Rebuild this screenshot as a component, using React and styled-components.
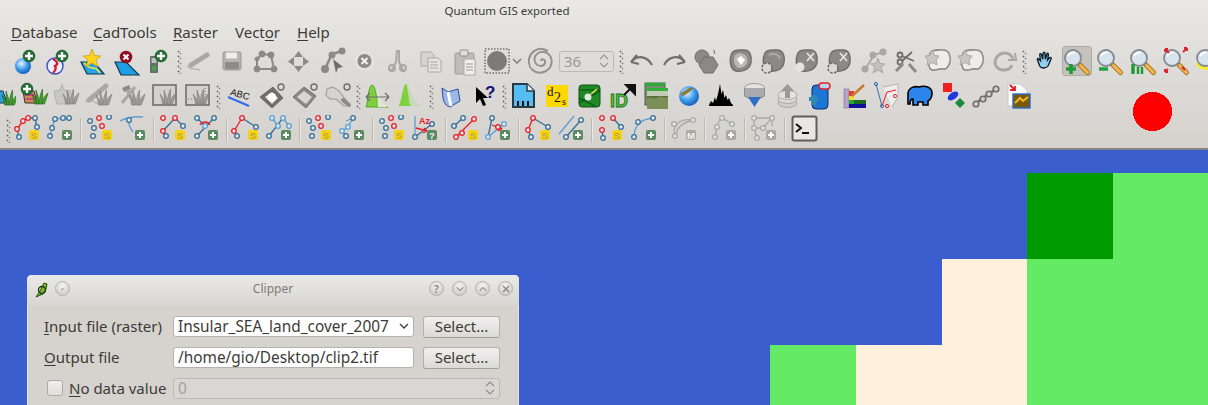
import React from 'react';
import styled, { createGlobalStyle } from 'styled-components';

const UI_FONT = '"Noto Sans", "Open Sans", sans-serif';

const Global = createGlobalStyle`
    html, body { margin: 0; padding: 0; background: #3b5ecf; }
    #root { width: 1208px; height: 405px; overflow: hidden; }
`;

const Page = styled.div`
    position: relative;
    width: 1208px;
    height: 405px;
    overflow: hidden;
    font-family: ${UI_FONT};
    display: flex;
    flex-direction: column;
`;

const Header = styled.header`
    height: 148px;
    flex: none;
    background: linear-gradient(#ebe9e6, #dedcd9 45%, #d5d2ce);
    border-bottom: 2px solid #85847f;
`;

const TitleText = styled.div`
    height: 21px;
    line-height: 21px;
    text-align: center;
    font-size: 11.5px;
    color: #3c3b37;
    padding-right: 194px;
    box-sizing: border-box;
    width: 1208px;
`;

const MenuBar = styled.nav`
    height: 23px;
    display: flex;
    padding-left: 11px;
    font-size: 15px;
    line-height: 22px;
    color: #3c3b37;
`;

const MenuItem = styled.span`
    width: ${p => p.$w}px;
    flex: none;
    u { text-underline-offset: 2px; }
`;

const Row = styled.div`
    display: flex;
    align-items: center;
    height: ${p => p.$h}px;
    margin-left: ${p => p.$left}px;
    margin-top: ${p => p.$top || 0}px;
`;

const Slot = styled.div`
    flex: none;
    width: ${p => p.$w || 33}px;
    height: ${p => p.$h || 34}px;
    svg { display: block; }
`;

const ActiveSlot = styled(Slot)`
    position: relative;
    svg { position: absolute; left: 0; top: 0; }
    &::before {
        content: '';
        position: absolute;
        left: 2px;
        top: 2px;
        width: 30px;
        height: 30px;
        box-sizing: border-box;
        border: 1px solid #aeaba7;
        border-radius: 3px;
        background: #c5c2be;
    }
`;

const Grip = styled.div`
    flex: none;
    width: ${p => p.$w}px;
    height: 25px;
    background-image:
        radial-gradient(circle, #66645f 0.8px, transparent 1.1px),
        radial-gradient(circle, #8f8d88 0.8px, transparent 1.1px);
    background-size: 3px 5px, 3px 5px;
    background-position: ${p => p.$dx}px 0, ${p => p.$dx + 2}px 2px;
    background-repeat: repeat-y;
`;

const Divider = styled.div`
    flex: none;
    width: 7px;
    height: 24px;
    display: flex;
    justify-content: center;
    &::before {
        content: '';
        width: 1px;
        background: #bbb8b4;
        box-shadow: 1px 0 0 #e9e7e4;
    }
`;

const SpinTool = styled.div`
    flex: none;
    width: 55px;
    height: 21px;
    margin: 0 0 0 2px;
    box-sizing: border-box;
    border: 1px solid #bcb9b5;
    border-radius: 3px;
    background: #dfddda;
    color: #9a9894;
    font-size: 15px;
    line-height: 19px;
    padding-left: 4px;
    display: flex;
    justify-content: space-between;
    svg { margin: 1px 4px 0 0; }
`;

const RedDot = styled.svg`
    position: absolute;
    left: 1133px;
    top: 92px;
`;

const MapArea = styled.main`
    flex: 1;
    background: #3b5ecf;
    display: grid;
    grid-template-columns: 770px 86px 86px 85px 86px 95px;
    grid-template-rows: 23px 86px 86px 60px;
`;

const Cell = styled.div`
    grid-column: ${p => p.$col} / span ${p => p.$span || 1};
    grid-row: ${p => p.$row} / span ${p => p.$rows || 1};
    background: ${p => p.$color};
`;

const Dialog = styled.section`
    position: absolute;
    left: 27px;
    top: 275px;
    width: 492px;
    height: 140px;
    box-sizing: border-box;
    background: #d6d3cf;
    border-radius: 5px 5px 0 0;
    box-shadow: inset 0 1px 0 #f2f1ef, inset 1px 0 0 #e6e4e1, inset -1px 0 0 #e6e4e1;
`;

const DialogBar = styled.div`
    height: 30px;
    display: flex;
    align-items: center;
    position: relative;
    padding: 0 6px 0 8px;
    background: linear-gradient(#ebe9e7, #d9d7d3);
    border-radius: 5px 5px 0 0;
`;

const DialogTitle = styled.div`
    position: absolute;
    left: 0;
    right: 0;
    text-align: center;
    font-size: 12px;
    color: #7d7b76;
    margin-top: -3px;
`;

const WinButton = styled.span`
    flex: none;
    width: 15px;
    height: 15px;
    margin-left: ${p => p.$gap}px;
    margin-top: -3px;
    box-sizing: border-box;
    border: 1px solid #b3b1ad;
    border-radius: 50%;
    background: radial-gradient(circle at 50% 30%, #f4f3f1, #c6c4c0);
    display: flex;
    align-items: center;
    justify-content: center;
    font-size: 10px;
    line-height: 1;
    color: #8a8883;
    font-weight: 700;
`;

const BarSpacer = styled.span`
    flex: 1;
`;

const Form = styled.div`
    display: grid;
    grid-template-columns: 129px 241px 9px 77px;
    grid-auto-rows: 21px;
    row-gap: 10px;
    padding: 11px 0 0 17px;
    align-items: center;
    font-size: 15px;
    color: #3c3b37;
`;

const FieldLabel = styled.label`
    grid-column: 1;
    white-space: nowrap;
    display: flex;
    align-items: center;
    padding-bottom: 2px;
    u { text-underline-offset: 2px; }
`;

const Field = styled.div`
    grid-column: ${p => (p.$wide ? '2 / span 3' : '2')};
    height: 21px;
    box-sizing: border-box;
    border: 1px solid ${p => (p.$wide ? '#bcb9b5' : '#b5b2ae')};
    border-radius: 3px;
    background: ${p => (p.$wide ? '#d9d7d3' : '#ffffff')};
    color: ${p => (p.$wide ? '#a3a19c' : '#3c3b37')};
    font-size: 15.4px;
    line-height: 17px;
    padding: 0 4px 1px;
    display: flex;
    justify-content: space-between;
    align-items: center;
    white-space: nowrap;
`;

const SelectButton = styled.div`
    grid-column: 4;
    height: 22px;
    box-sizing: border-box;
    border: 1px solid #b3b0ac;
    border-bottom-color: #a3a09c;
    border-radius: 3px;
    background: linear-gradient(#f1f0ee, #dcdad7);
    text-align: center;
    line-height: 19px;
`;

const Check = styled.span`
    flex: none;
    width: 16px;
    height: 16px;
    margin: 0 6px 0 3px;
    box-sizing: border-box;
    border: 1px solid #aeaba7;
    border-radius: 3px;
    background: linear-gradient(#f0efed, #e0dedb);
`;

const G1 = '#8b8a87';
const G2 = '#a9a8a5';
const G3 = '#6f6e6b';
const BLUE = '#356d96';
const LBLUE = '#5b9fd3';
const RED = '#ea1c24';
const GREEN = '#1f6f30';

const Defs = styled.svg`
    position: absolute;
    width: 0;
    height: 0;
`;

const Plus = ({ x, y, r = 6 }) => (
    <g>
        <circle cx={x} cy={y} r={r} fill={GREEN} stroke="#16401f" strokeWidth=".5" />
        <path d={`M${x - r + 2} ${y}H${x + r - 2}M${x} ${y - r + 2}V${y + r - 2}`} stroke="#fff" strokeWidth="2.4" />
    </g>
);

const leaf = (x, y, dx, h) =>
    `M${x - 1.4} ${y}Q${x + dx * 0.2 - 1.4} ${y - h * 0.6} ${x + dx} ${y - h}Q${x + dx * 0.4 + 1.6} ${y - h * 0.5} ${x + 1.4} ${y}Z`;

const Grass = ({ x = 20, y = 24, color = '#48a02e', dark = '#1c5e16' }) => (
    <g fill={color} stroke={dark} strokeWidth=".6">
        <path d={leaf(x - 2, y, -4, 10)} />
        <path d={leaf(x + 5, y, 5, 11)} />
        <path d={leaf(x, y, -2, 14)} />
        <path d={leaf(x + 2.5, y, 2, 15)} />
    </g>
);

const GrayGrass = props => <Grass {...props} color="#9f9e9b" dark="#7c7b79" />;

const Blob = ({ d = 'M8 9C10 5 16 6 20 6C26 6 28 12 27 18C26 26 18 28 12 27C6 26 5 15 8 9Z', fill = G1, inner }) => (
    <g>
        <path d={d} fill={fill} stroke={G3} strokeWidth="1.5" />
        {inner}
    </g>
);

const Magnifier = ({ children, glow }) => (
    <g>
        {glow && <path d="M5 19C8 25 16 26 21 22" stroke="#f4ee2c" strokeWidth="3" fill="none" />}
        <path d="M20 21L27.500 28.500" stroke="#a87628" strokeWidth="5" strokeLinecap="round" />
        <path d="M20.500 21.500L27.500 28.500" stroke="#f2b84c" strokeWidth="3" strokeLinecap="round" />
        <circle cx="13" cy="14" r="8" fill="#d7e3ee" stroke="#85898e" strokeWidth="1.800" />
        <path d="M8 12C9 10 12 8 15 8.500" stroke="#fff" strokeWidth="1.800" fill="none" />
        {children}
    </g>
);

// row one and two drawings, 33 x 34 box
const DRAW = {
    plusOnly: <Plus x={7} y={9} r={6} />,
    addGlobe: (
        <g>
            <circle cx="14" cy="22" r="8" fill="url(#globe)" />
            <Plus x={20} y={12} r={6} />
        </g>
    ),
    addWms: (
        <g>
            <circle cx="13" cy="22" r="8" fill="#eef" stroke="#3a4fc0" strokeWidth="1.4" />
            <path d="M11 15C15 17 17 20 13 22C15 25 12 28 11 29" stroke="#d81e2a" strokeWidth="2.4" fill="none" />
            <Plus x={20} y={12} r={6} />
        </g>
    ),
    addStar: (
        <g>
            <path d="M6 18L19 18L29 30L12 30Z" fill="#27a4e2" stroke="#12364f" strokeWidth="1.2" />
            <path d="M9 19C13 22 14 25 19 24C22 24 23 27 25 29" stroke="#e5e24d" strokeWidth="1.6" fill="none" />
            <path d="M17 5L19.5 11.5L26 12L21 16L23 23L17 19L11 23L13 16L8 12L14.500 11.5Z" fill="#fdd21a" stroke="#c99a10" strokeWidth=".7" />
        </g>
    ),
    removeLayer: (
        <g>
            <path d="M7 18L18 18L31 31L13 31Z" fill="#1e9fe4" stroke="#12364f" strokeWidth="1.2" />
            <circle cx="18" cy="13" r="6.3" fill="#8e1020" />
            <path d="M15.500 10.500L20.500 15.500M20.500 10.500L15.500 15.500" stroke="#fff" strokeWidth="2" />
        </g>
    ),
    phoneAdd: (
        <g>
            <rect x="9" y="12" width="8" height="17" rx="1" fill="#62706a" />
            <rect x="10.500" y="14" width="5" height="5" fill="#b8c4bd" />
            <rect x="11" y="22" width="4" height="5" fill="#4aa050" />
            <Plus x={20} y={12} r={6} />
        </g>
    ),
    pencil: (
        <g>
            <path d="M8 21L24 11" stroke={G2} strokeWidth="5" strokeLinecap="round" />
            <path d="M4 23L8 21M6 24L17 26" stroke={G2} strokeWidth="1" />
        </g>
    ),
    save: (
        <g>
            <rect x="7" y="8" width="18" height="18" rx="1.5" fill="#b5b4b2" stroke="#9a9997" />
            <rect x="10" y="8.500" width="11" height="6" fill="#efeeec" />
            <rect x="9" y="18" width="14" height="7" fill="#8d8c8a" />
        </g>
    ),
    vectorPoly: (
        <g fill={G1} stroke={G1}>
            <path d="M13 10L22 11L25 25L8 25L8 15Z" fill="none" strokeWidth="2" />
            <circle cx="13" cy="10" r="3" /><circle cx="22" cy="11" r="3" /><circle cx="25" cy="25" r="3" /><circle cx="8" cy="25" r="3" /><circle cx="8" cy="15" r="2" />
        </g>
    ),
    move: <path d="M16.500 7L21 13H12ZM16.500 28L12 22H21ZM6 17.500L12 13V22ZM27 17.500L21 22V13Z" fill={G1} />,
    nodeTool: (
        <g fill={G1}>
            <path d="M10 25L17 10L27 7" stroke={G1} strokeWidth="2.5" fill="none" />
            <circle cx="10" cy="25" r="4" /><circle cx="17" cy="11" r="3.500" /><circle cx="27" cy="7" r="3.500" />
            <path d="M18 15L28 23L23 24L21 29Z" fill={G3} />
        </g>
    ),
    deleteSel: (
        <g>
            <circle cx="16.500" cy="17" r="10" fill="#e4e2df" />
            <circle cx="16.500" cy="17" r="7" fill={G1} />
            <path d="M13.500 14L19.500 20M19.500 14L13.500 20" stroke="#f2f1ef" strokeWidth="2.2" />
        </g>
    ),
    scissors: (
        <g fill="none" stroke={G2} strokeWidth="2">
            <path d="M16 6L15 18L10 28M18 6L18 18L23 28" />
            <circle cx="11" cy="24" r="3" /><circle cx="22" cy="24" r="3" />
        </g>
    ),
    copy: (
        <g stroke={G2} fill="#d6d4d1">
            <path d="M7 8H17L20 11V22H7Z" />
            <path d="M14 14H24L27 17V28H14Z" fill="#e6e4e1" />
            <path d="M16 18H24M16 21H24M16 24H24" />
        </g>
    ),
    paste: (
        <g>
            <rect x="8" y="9" width="19" height="21" rx="1.5" fill="#bfbdba" stroke="#9e9d9a" />
            <rect x="13" y="6" width="8" height="6" rx="1" fill="#e0dedb" stroke="#8f8e8b" />
            <path d="M17 15H28V31H17Z" fill="#f0efed" stroke="#a9a8a5" />
            <path d="M19 20H26M19 23H26M19 26H26" stroke="#9a9997" />
        </g>
    ),
    spiral: <path d="M17 17C17 14 22 15 21 19C20 23 13 23 11 18C9 12 14 7 20 8C26 9 29 15 27 21C25 27 18 30 12 28C7 26 4 21 5 15C6 9 12 4 19 5L24 7" fill="none" stroke="#93928f" strokeWidth="2" />,
    undo: <path d="M6 18L12 11M6 18L14 20M7 17C13 11 22 12 27 21" fill="none" stroke={G3} strokeWidth="2.2" />,
    redo: <path d="M27 18L21 11M27 18L19 20M26 17C20 11 11 12 6 21" fill="none" stroke={G3} strokeWidth="2.2" />,
    hexBlob: (
        <g>
            <circle cx="11" cy="13" r="7" fill={G1} stroke={G3} />
            <path d="M13 13H22L27 21L22 29H13L8 21Z" fill="#8a8987" stroke={G3} />
            <path d="M22 6C24 7 24 9 23 10" stroke={G3} fill="none" />
        </g>
    ),
    blobFill: (
        <Blob inner={<g><path d="M11 11C14 8 22 9 23 14C25 20 20 24 15 24C10 23 9 15 11 11Z" fill="#bbb9b6" /><path d="M13 15L17 12L21 16L17 21Z" fill="#fff" /></g>} />
    ),
    blobRing: (
        <Blob inner={<g><circle cx="10" cy="24" r="5" fill="#dcdad7" stroke={G3} strokeWidth="1.6" strokeDasharray="2.500 1.500" /><path d="M12 11C16 9 22 10 23 15" stroke="#aaa" strokeWidth="2" fill="none" /></g>} />
    ),
    blobX: (
        <Blob inner={<g><circle cx="10" cy="23" r="4.500" fill="#e6e4e1" /><path d="M17 9L24 17M24 9L17 17" stroke="#e9e8e6" strokeWidth="1.6" /></g>} />
    ),
    ringX: (
        <Blob inner={<g><circle cx="10" cy="24" r="5" fill="#dcdad7" stroke={G3} strokeWidth="1.6" strokeDasharray="2.500 1.500" /><path d="M17 9L24 17M24 9L17 17" stroke="#e9e8e6" strokeWidth="1.6" /></g>} />
    ),
    starNodes: (
        <g fill={G2}>
            <path d="M10 24L18 11L27 8" stroke={G2} strokeWidth="2" fill="none" />
            <circle cx="9" cy="25" r="3.500" /><circle cx="17" cy="11" r="3.500" /><circle cx="27" cy="8" r="3.500" />
            <path d="M22 14L24 19.500L29 20L25 23L27 29L22 26L17 29L19 23L15 20L20 19.500Z" fill="#c3c1be" stroke={G2} />
        </g>
    ),
    cutNodes: (
        <g fill="none" stroke={G3} strokeWidth="1.8">
            <circle cx="11" cy="11" r="2.500" /><circle cx="11" cy="18" r="2.500" />
            <path d="M13 12L25 17M13 17L23 8" />
            <path d="M7 27L14 20" strokeWidth="3" stroke={G1} />
            <path d="M20 20L27 28" strokeWidth="3" stroke={G1} />
        </g>
    ),
    starBlob: (
        <g>
            <path d="M8 9C11 5 17 6 21 6C27 6 29 12 28 18C27 21 25 26 21 25C17 24 14 27 10 26C6 25 6 15 8 9Z" fill="#efedeb" stroke={G1} strokeWidth="1.6" />
            <path d="M10 6L12.500 11.500L17 12L14 16L15 21L10 18.500L5 21L6 16L3 12L7.500 11.500Z" fill="#c9c7c4" stroke={G2} />
        </g>
    ),
    redoGray: (
        <g fill="none" stroke={G2} strokeWidth="3">
            <path d="M24 21C22 27 12 28 8 22C5 16 10 9 17 9C21 9 24 12 25 15" />
            <path d="M20 16L28 16L27 9" strokeWidth="2" />
        </g>
    ),
    hand: (
        <g transform="translate(4.500 4) scale(.75)">
            <path d="M11 24L8 16C7 14 9 13 10 15L12 17L11 9C11 7 13 7 13.500 9L15 15L15.500 7C16 5 18 5 18 7L18.500 15L20.500 8C21 6 23 7 22.500 9L21.500 16L24 13C25 12 27 13 26 15L22 24C20 27 13 28 11 24Z" fill="#93cfee" stroke="#0e1a24" strokeWidth="1.8" />
        </g>
    ),
    zoomIn: (
        <Magnifier>
            <path d="M6 25H16M11 20V30" stroke="#1f9a36" strokeWidth="3.500" />
        </Magnifier>
    ),
    zoomOut: (
        <Magnifier>
            <path d="M6 25H15" stroke="#24a048" strokeWidth="3.500" />
        </Magnifier>
    ),
    zoomFull: (
        <Magnifier>
            <path d="M7 20V30" stroke="#1f9a36" strokeWidth="3.500" />
            <path d="M12 23V30M16 23V30" stroke="#1f9a36" strokeWidth="2.500" />
        </Magnifier>
    ),
    zoomLayer: (
        <Magnifier>
            <path d="M6 5L10 9M6 5H9M6 5V8M28 4L24 8M28 4H25M28 4V7M6 28L9 25M6 28H9M6 28V25M26 26L23 23" stroke="#d8202c" strokeWidth="1.800" fill="none" />
        </Magnifier>
    ),
    zoomSel: <Magnifier glow />,

    // row two
    mapPart: (
        <g>
            <path d="M6 12H20L24 24H12Z" fill="#2a9fd8" stroke="#12364f" />
            <Grass x={25} y={26} />
        </g>
    ),
    addRaster: (
        <g>
            <path d="M7 12H18L21 24H9Z" fill="#d08a5a" stroke="#333" />
            <path d="M9 16H19M10 20H20" stroke="#c8487a" strokeWidth="2" />
            <Plus x={11} y={10} r={6} />
            <Grass x={22} y={25} />
        </g>
    ),
    starGrass: (
        <g>
            <path d="M13 5L15 11L22 12L19 19L21 25H8L6 18L5 12L11 11Z" fill="#c9c7c4" stroke="#b5b3b0" />
            <GrayGrass x={20} y={25} />
        </g>
    ),
    pencilGrass: (
        <g>
            <path d="M7 21L24 7" stroke={G2} strokeWidth="5" strokeLinecap="round" />
            <path d="M3 23L8 21L18 26" stroke={G2} strokeWidth="1" fill="none" />
            <GrayGrass x={20} y={26} />
        </g>
    ),
    hammerGrass: (
        <g>
            <path d="M7 9L14 6L16 10L9 13Z" fill={G1} />
            <path d="M12 11L20 24" stroke={G2} strokeWidth="3.500" />
            <path d="M7 24L20 8" stroke={G2} strokeWidth="3" />
            <GrayGrass x={20} y={26} />
        </g>
    ),
    rectGrass: (
        <g>
            <rect x="5" y="6" width="23" height="20" fill="#d4d2ce" stroke={G3} strokeWidth="1.6" />
            <GrayGrass x={18} y={25} />
        </g>
    ),
    rectDotGrass: (
        <g>
            <rect x="5" y="6" width="23" height="20" fill="#d4d2ce" stroke={G3} strokeWidth="1.6" />
            <path d="M7 20H16M24 9V24" stroke={G3} strokeDasharray="1 2" />
            <GrayGrass x={18} y={25} />
        </g>
    ),
    abc: (
        <g>
            <text x="8" y="18" transform="rotate(16 16 16)" fontFamily='"Liberation Sans", sans-serif' fontSize="9.500" fill="#111">ABC</text>
            <path d="M6 18L27 27" stroke="#2c6fe8" strokeWidth="2" />
        </g>
    ),
    tagDark: (
        <g>
            <path d="M5 18L18 8L28 19L17 29Z" fill="#6f6e6b" stroke={G3} />
            <path d="M10 18L17 13L23 19L17 25Z" fill="#e9e8e6" />
            <circle cx="17" cy="18" r="4" fill="#fff" />
            <circle cx="26" cy="8" r="3" fill="none" stroke={G3} strokeWidth="1.400" />
        </g>
    ),
    tagLight: (
        <g>
            <path d="M5 18L16 8L28 17L18 29Z" fill={G1} stroke={G3} />
            <path d="M9 18L16 12L24 18L18 25Z" fill="#d9d7d3" />
            <circle cx="26" cy="8" r="3" fill="none" stroke={G3} strokeWidth="1.400" />
        </g>
    ),
    wrenchTag: (
        <g>
            <path d="M6 10L12 8L18 12L24 20C28 23 27 28 23 27L15 20L9 20L5 16Z" fill="#d6d4d1" stroke={G2} strokeWidth="1.400" />
            <path d="M22 21L28 26" stroke={G1} strokeWidth="4" strokeLinecap="round" />
            <circle cx="26" cy="8" r="3" fill="none" stroke={G3} strokeWidth="1.400" />
        </g>
    ),
    curveArrow: (
        <g>
            <path d="M5 28C7 24 7 7 11 6C15 5 15 24 19 26C22 27 24 28 27 28Z" fill="#7fd03e" stroke="#5aa52a" />
            <path d="M16 7C17 14 20 25 27 28H17Z" fill="#dfe7d4" />
            <path d="M5 18L9 14M5 18L9 22M5 18H28M28 18L24 14M28 18L24 22" stroke={G3} fill="none" strokeWidth="1.200" />
        </g>
    ),
    curveTail: (
        <g>
            <path d="M5 26C8 25 10 5 13 5C16 5 17 25 29 27H5Z" fill="#c6d8b8" />
            <path d="M5 26C7 25 9 5 12 5C13 5 14 15 15 20C15 23 16 26 17 27H5Z" fill="#7fd03e" />
        </g>
    ),
    book: (
        <g>
            <path d="M8 9L14 13L24 10L26 22L16 28C12 27 10 24 9 19Z" fill="#9cb8e6" stroke="#2b4c9c" />
            <path d="M14 13L17 27" stroke="#fff" strokeWidth="3" />
        </g>
    ),
    whatsThis: (
        <g>
            <path d="M9 8L9 24L13 20L16 27L19 26L16 19L21 19Z" fill="#000" />
            <text x="18" y="19" fontFamily='"Liberation Sans", sans-serif' fontSize="17" fontWeight="700" fill="#10107a">?</text>
        </g>
    ),
    docBlue: (
        <g>
            <path d="M6 5H20L27 12V28H6Z" fill="#56bdf4" stroke="#2a3a44" strokeWidth="2" />
            <path d="M20 5V12H27" fill="#e5f2fa" stroke="#2a3a44" strokeWidth="1.500" />
            <path d="M11 27V22M16 27V22M21 27V22" stroke="#111" strokeWidth="2" />
        </g>
    ),
    d2s: (
        <g>
            <rect x="6" y="6" width="22" height="22" fill="#ffd800" />
            <text x="7" y="17" fontFamily='"Liberation Serif", serif' fontSize="13" fill="#111">d</text>
            <text x="14" y="23" fontFamily='"Liberation Serif", serif' fontSize="14" fill="#111">2</text>
            <text x="22" y="26" fontFamily='"Liberation Serif", serif' fontSize="10" fill="#111">s</text>
        </g>
    ),
    drum: (
        <g>
            <rect x="6" y="6" width="21" height="22" rx="3" fill="#1f8a24" stroke="#12501a" />
            <path d="M6 11H27M6 24L27 12M6 19L22 27" stroke="#0b4b12" strokeWidth="1.200" />
            <circle cx="15" cy="18" r="3.500" fill="#e6e8e0" />
            <path d="M18 15L24 10" stroke="#f0e050" strokeWidth="1.500" />
        </g>
    ),
    idArrow: (
        <g>
            <text x="4" y="28" fontFamily='"Liberation Sans", sans-serif' fontSize="18" fontWeight="700" fill="#55c23a" stroke="#1c6b1c" strokeWidth=".8">ID</text>
            <path d="M18 16L26 8M20 6H29V15Z" stroke="#111" strokeWidth="2" fill="#111" />
        </g>
    ),
    photo: (
        <g>
            <rect x="6" y="4" width="20" height="22" fill="#7c8a6e" stroke="#505a4a" />
            <rect x="6" y="4" width="20" height="3" fill="#2fa83a" />
            <rect x="8" y="9" width="21" height="21" fill="#566f3e" />
            <rect x="8" y="9" width="21" height="3" fill="#2fb03c" />
            <rect x="8" y="12" width="21" height="5" fill="#c2ccb4" />
            <path d="M8 20C12 16 15 22 19 18C23 16 26 20 29 18V30H8Z" fill="#7d8f58" />
        </g>
    ),
    globeGeo: (
        <g>
            <circle cx="17" cy="17" r="10" fill="url(#globe)" />
            <path d="M8 15L17 9L22 9L16 14L11 17Z" fill="#8b7a36" />
        </g>
    ),
    histogram: <path d="M4 26L6 22L8 24L10 18L11 22L13 15L15 5L16.500 15L18 11L19.500 19L21 16L22.500 21L24 19L26 24L28 26V27H4Z" fill="#000" />,
    dbArrow: (
        <g>
            <ellipse cx="16.500" cy="9" rx="10" ry="4.500" fill="#e4e4e2" stroke="#9a9997" />
            <path d="M6.500 9V17L16.500 22L26.500 17V9" fill="#a8aab0" stroke="#8d8c8a" />
            <path d="M10 18H23L16.500 28Z" fill="#2f6fc2" />
        </g>
    ),
    stackUp: (
        <g>
            <ellipse cx="16.500" cy="24" rx="9.500" ry="4.500" fill="#cfcdc9" stroke={G2} />
            <ellipse cx="16.500" cy="20" rx="9.500" ry="4.500" fill="#dbd9d5" stroke={G2} />
            <ellipse cx="16.500" cy="16" rx="9.500" ry="4.500" fill="#e5e3e0" stroke={G2} />
            <path d="M16.500 5L23 12H19V19H14V12H10Z" fill="#9a9997" />
        </g>
    ),
    dbPlus: (
        <g>
            <rect x="8" y="6" width="16" height="24" rx="4" fill="#1c76d6" stroke="#0b2c66" />
            <rect x="15" y="4" width="11" height="6" rx="3" fill="#b8d8f0" stroke="#e8202c" strokeWidth="1.500" />
            <path d="M5 20H14M10 16V26" stroke="#2d8ab2" strokeWidth="4" />
        </g>
    ),
    ramp: (
        <g>
            <rect x="7" y="10" width="5" height="19" fill="#b8a0d0" stroke="#777" strokeWidth=".6" />
            <rect x="12" y="12" width="5" height="5" fill="#e83a2c" />
            <rect x="12" y="17" width="5" height="4" fill="#f0e030" />
            <rect x="12" y="21" width="5" height="4" fill="#1fa82c" />
            <rect x="12" y="25" width="17" height="4" fill="#10109a" />
            <rect x="17" y="21" width="12" height="4" fill="#1f6a1f" />
            <path d="M15 17L27 6" stroke="#c87a28" strokeWidth="2.500" />
        </g>
    ),
    polyEdit: (
        <g fill="none">
            <path d="M6 5L12 27" stroke="#356db0" />
            <path d="M13 8L28 5L28 18L22 28" stroke="#b5b3b0" fill="#ededeb" />
            <path d="M12 27L17 13L26 11" stroke={RED} />
            <circle cx="6" cy="5" r="1.600" stroke="#356db0" /><circle cx="12" cy="27" r="1.600" stroke="#356db0" />
            <circle cx="17" cy="27" r="1.600" stroke={RED} /><circle cx="25" cy="17" r="1.600" stroke={RED} />
        </g>
    ),
    elephant: (
        <path d="M5 14C6 8 12 7 16 8C22 6 29 8 29 14C29 19 27 21 25 22V26H20V23H15V26H10V20C8 20 7 22 7 25H5Z" fill="#2b85ea" stroke="#000" strokeWidth="1.600" />
    ),
    shapes: (
        <g>
            <rect x="7" y="4" width="9" height="9" fill="#ee2020" />
            <ellipse cx="17" cy="17" rx="6" ry="3.500" transform="rotate(-35 17 17)" fill="#2038e0" />
            <path d="M24 19L29 24L24 29L19 24Z" fill="#1a8a3a" />
        </g>
    ),
    chain: (
        <g fill="#d4d2ce" stroke="#6f6e6b" strokeWidth="1.600">
            <path d="M7 24L27 10" strokeWidth="2.400" />
            <circle cx="7" cy="25" r="2.800" /><circle cx="14" cy="20" r="2.800" /><circle cx="20" cy="15" r="2.800" /><circle cx="27" cy="10" r="2.800" />
        </g>
    ),
    docImage: (
        <g>
            <path d="M6 5H18L25 11V27H6Z" fill="#fdfdfd" stroke="#c8c8cc" />
            <path d="M8 6L13 11M8 11H13V7" stroke="#e81c24" strokeWidth="1.800" fill="none" />
            <rect x="11" y="15" width="17" height="14" fill="#7a5a08" stroke="#2a6cc8" strokeWidth="1.400" />
            <path d="M13 24L18 19L21 22L26 18" stroke="#f0b820" strokeWidth="2" fill="none" />
        </g>
    ),
};

const Node = ({ p, c = BLUE }) => <circle cx={p[0]} cy={p[1]} r="2.300" fill="#dfe6ec" stroke={c} strokeWidth="1.300" />;

const Badge = ({ kind, x = 18 }) => {
    const fills = { S: '#f6d30f', '+': '#5a8a62', '?': '#5a8a62', M: '#a9a8a5', 'g+': '#a9a8a5' };
    return (
        <g>
            <rect x={x} y="15" width="10" height="10" rx="2" fill={fills[kind]} />
            {(kind === '+' || kind === 'g+') ? (
                <path d={`M${x + 2} 20H${x + 8}M${x + 5} 17V23`} stroke="#fff" strokeWidth="2" />
            ) : (
                <text x={x + 5} y="23.500" textAnchor="middle" fontFamily='"Liberation Sans", sans-serif' fontSize="9.500" fontWeight="700" fill={kind === 'S' ? '#c0a64a' : '#f2f2f0'}>{kind}</text>
            )}
        </g>
    );
};

const scatter = [[6, 6], [15, 3, RED], [25, 2], [18, 11, RED], [10, 13], [9, 21]];

// third row: nodes, lines and a badge, 33 x 30 box
const EDIT = [
    { badge: 'S', lines: [[BLUE, 'M8 22L6 14'], [RED, 'M6 14L12 6L17 3'], [BLUE, 'M17 3H24L26 12']], nodes: [[8, 22], [6, 14, RED], [12, 6, RED], [17, 3, RED], [24, 3], [26, 12]] },
    { badge: '+', lines: [[LBLUE, 'M6 21L8 13L11 4L19 3H25']], nodes: [[6, 21], [8, 13], [11, 4], [19, 3], [25, 3]] },
    'sep',
    { badge: 'S', nodes: scatter },
    { badge: '+', lines: [[LBLUE, 'M3 6C8 3 18 1 26 2M12 5C11 9 13 13 16 17']], nodes: [[12, 5]] },
    'sep',
    { badge: 'S', lines: [[BLUE, 'M6 16L18 3L26 11M6 16L9 21']], nodes: [[6, 3, RED], [18, 3, RED], [26, 11], [6, 16, RED], [9, 21]] },
    { badge: '+', lines: [[BLUE, 'M7 21L24 3M7 3L15 11'], [RED, 'M10 10C12 6 18 6 20 10']], nodes: [[7, 3], [24, 3], [15, 11, LBLUE], [7, 21]] },
    'sep',
    { badge: 'S', lines: [[RED, 'M4 16L12 3'], [BLUE, 'M12 3L26 12M4 16L7 21']], nodes: [[12, 3, RED], [26, 12], [4, 16, RED], [7, 21]] },
    { badge: '+', lines: [[BLUE, 'M6 21L20 3'], [LBLUE, 'M9 3L15 11M20 3L26 11']], nodes: [[9, 3, LBLUE], [20, 3, LBLUE], [26, 11, LBLUE], [15, 11, LBLUE], [6, 21]] },
    'sep',
    { badge: 'S', nodes: scatter },
    { badge: '+', lines: [[LBLUE, 'M17 3L10 6M17 3L12 12L6 16L10 21']], nodes: [[17, 3], [12, 12, LBLUE], [6, 16, LBLUE], [10, 21]] },
    'sep',
    { badge: 'S', nodes: scatter },
    { badge: '?', lines: [[LBLUE, 'M6 22V1'], [BLUE, 'M6 22L23 9'], [RED, 'M7 13L18 16M18 16L15 13M18 16L14 18']], nodes: [[6, 22], [23, 9]], label: 'Az' },
    'sep',
    { badge: 'S', x: 19, lines: [[BLUE, 'M5 11L14 3'], [RED, 'M7 22L25 4']], nodes: [[14, 3], [5, 11], [25, 4, RED], [13, 18, RED], [7, 22, RED]] },
    { badge: '+', lines: [[BLUE, 'M10 3L6 22'], [LBLUE, 'M6 22L22 9'], [RED, 'M10 10L20 14M20 14L17 11M20 14L16 16']], nodes: [[10, 3], [6, 22, LBLUE], [22, 9, LBLUE], [16, 12, RED]] },
    'sep',
    { badge: 'S', lines: [[RED, 'M6 15L11 3'], [BLUE, 'M11 3L26 12M6 15L9 22']], nodes: [[11, 3, RED], [26, 12], [6, 15, RED], [9, 22]] },
    { badge: '+', lines: [[LBLUE, 'M4 19L19 1'], [BLUE, 'M11 22L26 5']], nodes: [[11, 22], [26, 5]] },
    'sep',
    { badge: 'S', x: 17, lines: [[BLUE, 'M18 3L26 12M7 15L8 23']], nodes: [[7, 3, RED], [18, 3, RED], [26, 12], [7, 15, RED], [8, 23]] },
    { badge: '+', lines: [[LBLUE, 'M6 22C6 12 12 4 25 3']], nodes: [[6, 22], [10, 7, BLUE], [25, 3]] },
    'sep',
    { badge: 'M', gray: true, lines: [[G2, 'M7 21C4 12 10 3 25 5M8 21C8 14 14 8 25 5']], nodes: [[7, 21, G2], [6, 9, G2], [25, 5, G2]] },
    'sep',
    { badge: 'g+', gray: true, lines: [[G2, 'M7 22L9 12C10 8 12 4 14 3L24 9']], nodes: [[7, 22, G2], [9, 12, G2], [14, 3, G2], [24, 9, G2]] },
    'sep',
    { badge: 'g+', gray: true, lines: [[G2, 'M6 3V13L9 23M6 3H24L15 13H6M24 3V11']], nodes: [[6, 3, G2], [24, 3, G2], [6, 13, G2], [15, 13, G2], [9, 23, G2]] },
    'sep',
];

const Icon = ({ name }) => (
    <Slot>
        <svg width="33" height="34" viewBox="0 0 33 34">{DRAW[name]}</svg>
    </Slot>
);

const EditIcon = ({ item }) => (
    <Slot $h={30}>
        <svg width="33" height="30" viewBox="0 0 33 30" fill="none">
            {(item.lines || []).map(([c, d], i) => <path key={i} d={d} stroke={c} strokeWidth="1.300" />)}
            {item.label && <text x="10" y="9" fontFamily='"Liberation Sans", sans-serif' fontSize="9" fontWeight="700" fill={RED}>{item.label}</text>}
            {item.nodes.map((n, i) => <Node key={i} p={n} c={n[2] || BLUE} />)}
            <Badge kind={item.badge} x={item.x || 18} />
        </svg>
    </Slot>
);

const row1a = ['plusOnly', 'addGlobe', 'addWms', 'addStar', 'removeLayer', 'phoneAdd'];
const row1b = ['pencil', 'save', 'vectorPoly', 'move', 'nodeTool', 'deleteSel', 'scissors', 'copy', 'paste'];
const row1c = ['undo', 'redo', 'hexBlob', 'blobFill', 'blobRing', 'blobX', 'ringX', 'starNodes', 'cutNodes', 'starBlob', 'starBlob', 'redoGray'];
const row1d = ['zoomOut', 'zoomFull', 'zoomLayer', 'zoomSel'];
const row2a = ['mapPart', 'addRaster', 'starGrass', 'pencilGrass', 'hammerGrass', 'rectGrass', 'rectDotGrass'];
const row2b = ['abc', 'tagDark', 'tagLight', 'wrenchTag'];
const row2c = ['docBlue', 'd2s', 'drum', 'idArrow', 'photo', 'globeGeo', 'histogram', 'dbArrow', 'stackUp', 'dbPlus', 'ramp', 'polyEdit', 'elephant', 'shapes', 'chain', 'docImage'];

const icons = list => list.map((n, i) => <Icon key={n + i} name={n} />);

const Chevron = ({ up, color = '#3c3b37' }) => (
    <path d={up ? 'M1 5L5 1L9 5' : 'M1 1L5 5L9 1'} fill="none" stroke={color} strokeWidth="1.300" />
);

const SpinArrows = ({ color }) => (
    <svg width="10" height="16" viewBox="0 0 10 16">
        <path d="M1 6L5 2L9 6M1 10L5 14L9 10" fill="none" stroke={color} strokeWidth="1.200" />
    </svg>
);

const WindowIcon = () => (
    <svg width="14" height="16" viewBox="0 0 14 16">
        <path d="M1 15L5 9L9 1L12 2L11 7L8 12Z" fill="#7fb82a" stroke="#28520e" />
        <circle cx="7" cy="8" r="3.500" fill="none" stroke="#1f3f0c" strokeWidth="1.400" />
    </svg>
);

export default function App() {
    return (
        <Page>
            <Global />
            <Defs aria-hidden="true">
                <defs>
                    <radialGradient id="globe" cx=".4" cy=".35" r=".7">
                        <stop offset="0" stopColor="#e8f4ff" />
                        <stop offset=".55" stopColor="#3d9be8" />
                        <stop offset="1" stopColor="#0f55b8" />
                    </radialGradient>
                </defs>
            </Defs>
            <Header>
                <TitleText>Quantum GIS exported</TitleText>
                <MenuBar>
                    <MenuItem $w={82}><u>D</u>atabase</MenuItem>
                    <MenuItem $w={80}><u>C</u>adTools</MenuItem>
                    <MenuItem $w={62}><u>R</u>aster</MenuItem>
                    <MenuItem $w={62}>Vect<u>o</u>r</MenuItem>
                    <MenuItem $w={40}><u>H</u>elp</MenuItem>
                </MenuBar>
                <Row $h={34} $left={-24}>
                    {icons(row1a)}
                    <Grip $w={9} $dx={3} />
                    {icons(row1b)}
                    <Slot $w={44}>
                        <svg width="44" height="34" viewBox="0 0 44 34">
                            <circle cx="17" cy="17" r="10" fill="#7d7b78" />
                            <rect x="5" y="5" width="24" height="24" fill="none" stroke="#6f6e6b" strokeWidth="1.500" strokeDasharray="1.500 1.500" />
                            <path d="M33 15L37 19L41 15" fill="none" stroke="#777" strokeWidth="1.300" />
                        </svg>
                    </Slot>
                    <Icon name="spiral" />
                    <SpinTool>
                        36
                        <SpinArrows color="#9a9894" />
                    </SpinTool>
                    <Grip $w={11} $dx={5} />
                    {icons(row1c)}
                    <Grip $w={6} $dx={1} />
                    <Icon name="hand" />
                    <ActiveSlot><svg width="33" height="34" viewBox="0 0 33 34">{DRAW.zoomIn}</svg></ActiveSlot>
                    {icons(row1d)}
                </Row>
                <Row $h={34} $left={-17} $top={1}>
                    {icons(row2a)}
                    <Grip $w={8} $dx={2} />
                    {icons(row2b)}
                    <Grip $w={7} $dx={2} />
                    <Icon name="curveArrow" />
                    <Icon name="curveTail" />
                    <Grip $w={7} $dx={2} />
                    <Icon name="book" />
                    <Icon name="whatsThis" />
                    <Grip $w={7} $dx={2} />
                    {icons(row2c)}
                </Row>
                <Row $h={30} $left={5} $top={2}>
                    <Grip $w={6} $dx={1} />
                    {EDIT.map((item, i) => (item === 'sep' ? <Divider key={i} /> : <EditIcon key={i} item={item} />))}
                    <Slot $h={30}>
                        <svg width="33" height="30" viewBox="0 0 33 30">
                            <rect x="4.500" y="1.500" width="24" height="24" rx="2" fill="#e8e7e4" stroke="#5f5e5a" strokeWidth="2" />
                            <path d="M8 9L13 13L8 17" fill="none" stroke="#111" strokeWidth="2" />
                            <path d="M14 18H21" stroke="#111" strokeWidth="2" />
                        </svg>
                    </Slot>
                </Row>
            </Header>
            <MapArea>
                <Cell $col={5} $row={2} $color="#009900" />
                <Cell $col={6} $row={2} $color="#64ea64" />
                <Cell $col={4} $row={3} $color="#fef1dc" />
                <Cell $col={5} $row={3} $span={2} $color="#64ea64" />
                <Cell $col={2} $row={4} $color="#64ea64" />
                <Cell $col={3} $row={4} $span={2} $color="#fef1dc" />
                <Cell $col={5} $row={4} $span={2} $color="#64ea64" />
            </MapArea>
            <RedDot width="40" height="40" viewBox="0 0 40 40" shapeRendering="crispEdges">
                <circle cx="19.500" cy="19.500" r="19.500" fill="#ff0000" />
            </RedDot>
            <Dialog>
                <DialogBar>
                    <WindowIcon />
                    <WinButton $gap={6}>·</WinButton>
                    <DialogTitle>Clipper</DialogTitle>
                    <BarSpacer />
                    <WinButton $gap={0}>?</WinButton>
                    <WinButton $gap={8}>
                        <svg width="8" height="6" viewBox="0 0 10 6"><Chevron color="#8a8883" /></svg>
                    </WinButton>
                    <WinButton $gap={8}>
                        <svg width="8" height="6" viewBox="0 0 10 6"><Chevron up color="#8a8883" /></svg>
                    </WinButton>
                    <WinButton $gap={8}>
                        <svg width="8" height="8" viewBox="0 0 8 8"><path d="M1 1L7 7M7 1L1 7" stroke="#8a8883" strokeWidth="1.400" /></svg>
                    </WinButton>
                </DialogBar>
                <Form>
                    <FieldLabel><u>I</u>nput file (raster)</FieldLabel>
                    <Field>
                        Insular_SEA_land_cover_2007
                        <svg width="10" height="6" viewBox="0 0 10 6"><Chevron /></svg>
                    </Field>
                    <SelectButton>Select...</SelectButton>
                    <FieldLabel><u>O</u>utput file</FieldLabel>
                    <Field>/home/gio/Desktop/clip2.tif</Field>
                    <SelectButton>Select...</SelectButton>
                    <FieldLabel><Check /><u>N</u>o data value</FieldLabel>
                    <Field $wide>
                        0
                        <SpinArrows color="#8f8d89" />
                    </Field>
                </Form>
            </Dialog>
        </Page>
    );
}
